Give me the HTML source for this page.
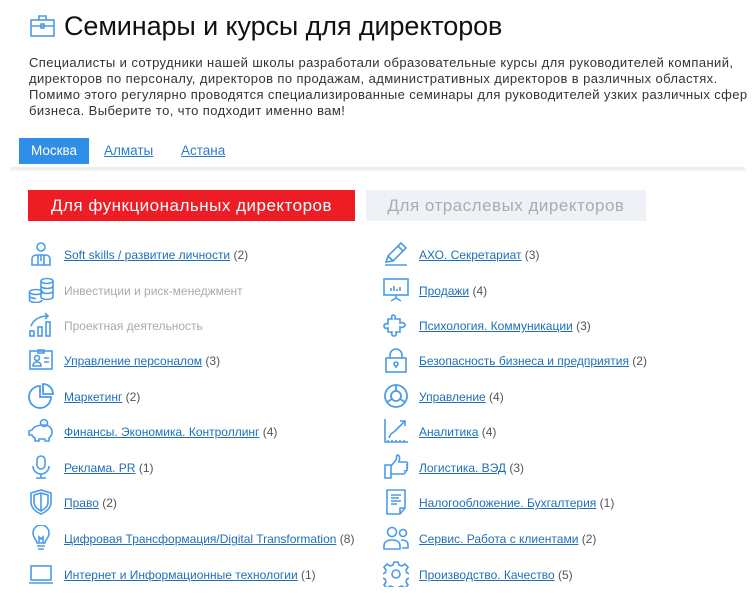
<!DOCTYPE html>
<html><head><meta charset="utf-8"><style>
*{margin:0;padding:0;box-sizing:border-box}
body{width:752px;height:593px;background:#fff;font-family:"Liberation Sans",Arial,sans-serif;position:relative;overflow:hidden;color:#222}
.abs{position:absolute}
h1{position:absolute;left:64px;top:11px;font-size:27px;font-weight:normal;color:#111;white-space:nowrap;letter-spacing:-0.1px}
.p{left:29px;top:55px;font-size:13px;line-height:16px;color:#333;letter-spacing:0.4px;white-space:nowrap}
.tab{top:138px;height:26px;font-size:13.5px;line-height:26px}
.tab a{color:#2a7ccf;text-decoration:underline}
.line{left:10px;top:167px;width:735px;height:2px;background:#eee;box-shadow:0 1px 2px #e4e4e4}
.btn{top:190px;height:31px;font-size:17px;line-height:31px;text-align:center;letter-spacing:0.5px}
.row{position:absolute;height:24px;font-size:12px;line-height:24px;white-space:nowrap;color:#555}
.row a{color:#1f6fb8;text-decoration:underline}
.row.dis{color:#aaa}
.row svg{position:absolute;left:-36px;top:-2px}
</style></head><body>
<svg class="abs" style="left:30px;top:15px" width="25" height="22" viewBox="0 0 25 22" fill="none" stroke="#4a9be8" stroke-width="1.6"><rect x="1" y="5" width="23" height="16"/><path d="M9 5V1h7v4M1 11h23M11 9h3v4h-3z"/></svg>
<h1>Семинары и курсы для директоров</h1>
<div class="abs p">Специалисты и сотрудники нашей школы разработали образовательные курсы для руководителей компаний,<br>директоров по персоналу, директоров по продажам, административных директоров в различных областях.<br>Помимо этого регулярно проводятся специализированные семинары для руководителей узких различных сфер<br>бизнеса. Выберите то, что подходит именно вам!</div>
<div class="abs tab" style="left:19px;width:70px;background:#2f8ee8;color:#fff;text-align:center">Москва</div>
<div class="abs tab" style="left:104px"><a>Алматы</a></div>
<div class="abs tab" style="left:181px"><a>Астана</a></div>
<div class="abs line"></div>
<div class="abs btn" style="left:28px;width:327px;background:#ee1c25;color:#fff">Для функциональных директоров</div>
<div class="abs btn" style="left:366px;width:280px;background:#eef2f6;color:#a9adb2">Для отраслевых директоров</div>

<div class="row" style="left:64px;top:243px"><svg width="26" height="26" viewBox="0 0 26 26" fill="none" stroke="#4a9be8" stroke-width="1.6"><circle cx="13" cy="6" r="4"/><path d="M4 24v-6a4 4 0 0 1 4-4h10a4 4 0 0 1 4 4v6zM10 14v10M16 14v10M13 14v6"/></svg><a>Soft skills / развитие личности</a> (2)</div>
<div class="row dis" style="left:64px;top:279px"><svg width="26" height="26" viewBox="0 0 26 26" fill="none" stroke="#4a9be8" stroke-width="1.6"><ellipse cx="19" cy="4" rx="6" ry="2.5"/><path d="M13 4v16c0 1.5 3 2.5 6 2.5s6-1 6-2.5V4M13 9c0 1.4 3 2.5 6 2.5s6-1.1 6-2.5M13 14c0 1.4 3 2.5 6 2.5s6-1.1 6-2.5"/><ellipse cx="8" cy="15" rx="6.5" ry="2.5"/><path d="M1.5 15v8c0 1.4 3 2.5 6.5 2.5s6-1 6-2.5M1.5 19c0 1.4 3 2.5 6.5 2.5"/></svg>Инвестиции и риск-менеджмент</div>
<div class="row dis" style="left:64px;top:314px"><svg width="26" height="26" viewBox="0 0 26 26" fill="none" stroke="#4a9be8" stroke-width="1.6"><rect x="2" y="19" width="4" height="5"/><rect x="10" y="15" width="4" height="9"/><rect x="18" y="10" width="4" height="14"/><path d="M3 14C6 7 12 4 20 4M17 1l3 3-3 3"/></svg>Проектная деятельность</div>
<div class="row" style="left:64px;top:349px"><svg width="26" height="26" viewBox="0 0 26 26" fill="none" stroke="#4a9be8" stroke-width="1.6"><rect x="2" y="4" width="22" height="18"/><path d="M10 3h6v3h-6z"/><circle cx="9" cy="11" r="2.5"/><path d="M5 19c0-3 2-4 4-4s4 1 4 4zM16 11h5M16 15h5"/></svg><a>Управление персоналом</a> (3)</div>
<div class="row" style="left:64px;top:385px"><svg width="26" height="26" viewBox="0 0 26 26" fill="none" stroke="#4a9be8" stroke-width="1.8"><path d="M12 3a11 11 0 1 0 11 11H12z"/><path d="M15 1v10h10A10 10 0 0 0 15 1z"/></svg><a>Маркетинг</a> (2)</div>
<div class="row" style="left:64px;top:420px"><svg width="26" height="26" viewBox="0 0 26 26" fill="none" stroke="#4a9be8" stroke-width="1.6"><circle cx="16" cy="5" r="3.5"/><path d="M4 12c2-4 7-5 12-5s8 3 8 7-2 5-3 6v3h-4v-2h-6v2H7v-3c-2-1-3-2-3-3H1v-4z"/></svg><a>Финансы. Экономика. Контроллинг</a> (4)</div>
<div class="row" style="left:64px;top:456px"><svg width="26" height="26" viewBox="0 0 26 26" fill="none" stroke="#4a9be8" stroke-width="1.6"><rect x="9" y="2" width="8" height="13" rx="4"/><path d="M5 12a8 8 0 0 0 16 0M13 20v4M8 24h10"/></svg><a>Реклама. PR</a> (1)</div>
<div class="row" style="left:64px;top:491px"><svg width="26" height="26" viewBox="0 0 26 26" fill="none" stroke="#4a9be8" stroke-width="1.6"><path d="M3 4l10-3 10 3v9c0 6-5 10-10 12C8 23 3 19 3 13z"/><path d="M6 6l7-2 7 2v7c0 4-3 7-7 9-4-2-7-5-7-9zM13 4v18"/></svg><a>Право</a> (2)</div>
<div class="row" style="left:64px;top:527px"><svg width="26" height="26" viewBox="0 0 26 26" fill="none" stroke="#4a9be8" stroke-width="1.6"><path d="M9 18c0-3-4-5-4-10a8 8 0 0 1 16 0c0 5-4 7-4 10zM9 21h8M10 24h6M11 18v-6l2 2 2-2v6"/></svg><a>Цифровая Трансформация/Digital Transformation</a> (8)</div>
<div class="row" style="left:64px;top:563px"><svg width="26" height="26" viewBox="0 0 26 26" fill="none" stroke="#4a9be8" stroke-width="1.6"><rect x="3" y="5" width="20" height="14"/><path d="M1 22h24"/></svg><a>Интернет и Информационные технологии</a> (1)</div>

<div class="row" style="left:419px;top:243px"><svg width="26" height="26" viewBox="0 0 26 26" fill="none" stroke="#4a9be8" stroke-width="1.6"><path d="M3 21l2-6L18 2l5 5L10 20zM15 5l5 5M5 15l5 5M2 24h22"/></svg><a>АХО. Секретариат</a> (3)</div>
<div class="row" style="left:419px;top:279px"><svg width="26" height="26" viewBox="0 0 26 26" fill="none" stroke="#4a9be8" stroke-width="1.6"><rect x="1" y="2" width="24" height="16"/><path d="M8 14v-3M11 14v-5M14 14v-2M17 14v-4M13 18v3M8 24l5-3 5 3"/></svg><a>Продажи</a> (4)</div>
<div class="row" style="left:419px;top:314px"><svg width="26" height="26" viewBox="0 0 26 26" fill="none" stroke="#4a9be8" stroke-width="1.6"><path d="M10 3c2 0 3 2 2 4h5v4c2-1 5 0 5 2s-3 3-5 2v5h-4c1 2 0 4-2 4s-3-2-2-4H5v-4c-2 1-4 0-4-2s2-3 4-2V7h4c-1-2 0-4 1-4z"/></svg><a>Психология. Коммуникации</a> (3)</div>
<div class="row" style="left:419px;top:349px"><svg width="26" height="26" viewBox="0 0 26 26" fill="none" stroke="#4a9be8" stroke-width="1.6"><rect x="3" y="11" width="20" height="14"/><path d="M7 11V8a6 6 0 0 1 12 0v3"/><circle cx="13" cy="17" r="2"/><path d="M13 19v2"/></svg><a>Безопасность бизнеса и предприятия</a> (2)</div>
<div class="row" style="left:419px;top:385px"><svg width="26" height="26" viewBox="0 0 26 26" fill="none" stroke="#4a9be8" stroke-width="1.8"><circle cx="13" cy="13" r="11"/><circle cx="13" cy="13" r="5"/><path d="M13 2v6M4 19l5-3M22 19l-5-3"/></svg><a>Управление</a> (4)</div>
<div class="row" style="left:419px;top:420px"><svg width="26" height="26" viewBox="0 0 26 26" fill="none" stroke="#4a9be8" stroke-width="1.6"><path d="M2 1v23h23M6 20c2-6 5-5 8-9l8-8M17 3h5v5M5 24v-2M9 24v-2M13 24v-2M17 24v-2M21 24v-2"/></svg><a>Аналитика</a> (4)</div>
<div class="row" style="left:419px;top:456px"><svg width="26" height="26" viewBox="0 0 26 26" fill="none" stroke="#4a9be8" stroke-width="1.6"><path d="M2 11h6v13H2zM8 12l5-6 1-5c3 0 3 3 2 7h7c2 0 2 3 0 3 2 0 2 3 0 3 2 0 2 3-1 3 1 1 0 3-2 3H8"/></svg><a>Логистика. ВЭД</a> (3)</div>
<div class="row" style="left:419px;top:491px"><svg width="26" height="26" viewBox="0 0 26 26" fill="none" stroke="#4a9be8" stroke-width="1.6"><path d="M4 1h18v18l-5 6H4zM22 19h-5v6M8 6h10M8 9h8M8 12h10M8 15h6"/></svg><a>Налогообложение. Бухгалтерия</a> (1)</div>
<div class="row" style="left:419px;top:527px"><svg width="26" height="26" viewBox="0 0 26 26" fill="none" stroke="#4a9be8" stroke-width="1.6"><circle cx="9" cy="7" r="4.5"/><circle cx="20" cy="8" r="3.5"/><path d="M1 24v-3c0-4 3-6 8-6s8 2 8 6v3zM18 15c4 0 7 1 7 5v3h-6"/></svg><a>Сервис. Работа с клиентами</a> (2)</div>
<div class="row" style="left:419px;top:563px"><svg width="26" height="26" viewBox="0 0 26 26" fill="none" stroke="#4a9be8" stroke-width="1.6"><circle cx="13" cy="13" r="4"/><path d="M11 1h4l1 3 3 1 3-2 3 3-2 3 1 3 3 1v4l-3 1-1 3 2 3-3 3-3-2-3 1-1 3h-4l-1-3-3-1-3 2-3-3 2-3-1-3-3-1v-4l3-1 1-3-2-3 3-3 3 2 3-1z"/></svg><a>Производство. Качество</a> (5)</div>
</body></html>
